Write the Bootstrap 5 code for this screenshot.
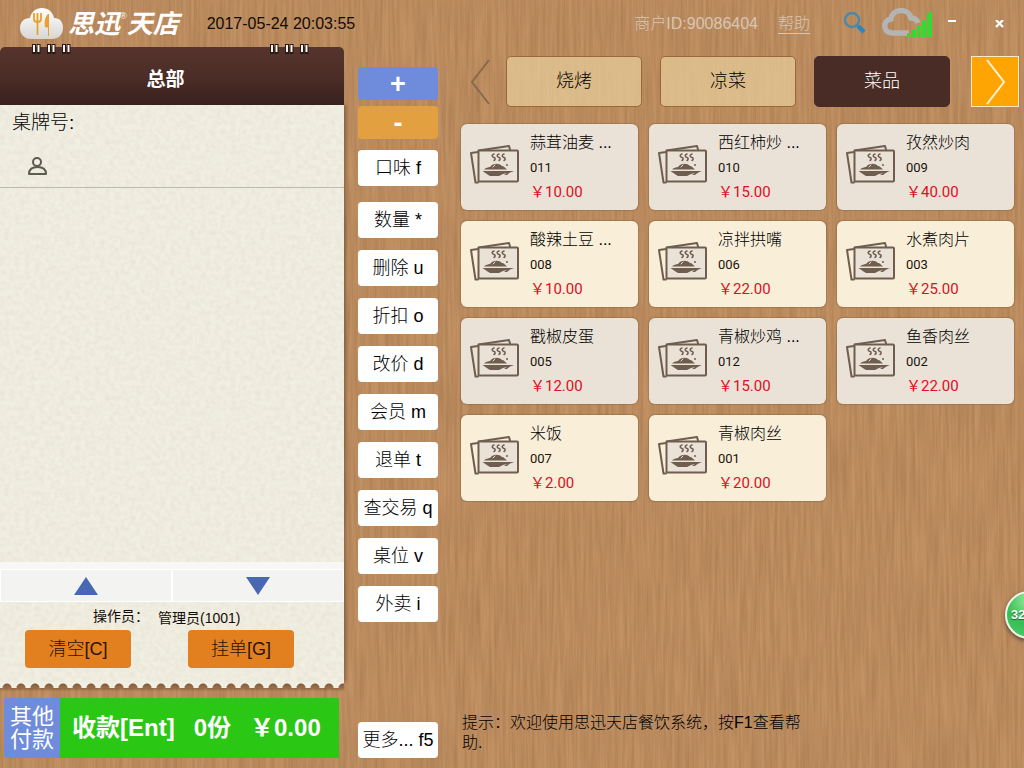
<!DOCTYPE html>
<html lang="zh-CN">
<head>
<meta charset="utf-8">
<meta name="viewport" content="width=device-width, initial-scale=1">
<title>思迅天店</title>
<link href="https://cdn.jsdelivr.net/npm/bootstrap@5.3.0/dist/css/bootstrap.min.css" rel="stylesheet">
<style>
  :root { --wood: #c29265; --paper: #f1efe3; --cocoa: #4a2c26; --ink: #120c08; }
  body {
    font-family: "Liberation Sans", "Noto Sans CJK SC", sans-serif;
    font-size: 16px; line-height: 20px; color: var(--ink);
    background-color: var(--wood);
    background-image: url("data:image/svg+xml,%3Csvg xmlns='http://www.w3.org/2000/svg' width='512' height='512'%3E%3Cfilter id='w' x='0' y='0' width='100%25' height='100%25' color-interpolation-filters='sRGB'%3E%3CfeTurbulence type='fractalNoise' baseFrequency='.35 .014' numOctaves='3' seed='7' stitchTiles='stitch'/%3E%3CfeColorMatrix values='0 0 0 0 .56 0 0 0 0 .38 0 0 0 0 .22 .6 0 0 0 -.14'/%3E%3C/filter%3E%3Crect width='512' height='512' filter='url(%23w)'/%3E%3C/svg%3E");
  }
  .btn { --bs-btn-font-family: inherit; font-weight: 400; }
  .light { font-weight: 300; }

  .topbar { height: 47px; padding-left: 20px; padding-right: 12px; }
  .brand-text { font-size: 26px; line-height: 36px; font-style: italic; font-weight: 700; color: #fff; }
  .brand-text sup { font-size: 9px; font-weight: 400; top: -14px; }
  .clock { margin-left: 24px; }
  .muted-link { color: #d6c6b4; }
  .help-link { text-decoration: none; border-bottom: 1px solid #d6c6b4; line-height: 19px; margin-left: 20px; }
  .win-btn { width: 24px; height: 24px; }

  .workspace { display: grid; grid-template-columns: 43fr 12fr 73fr; min-height: calc(100vh - 47px); }

  .ticket-head {
    height: 58px; padding: 7px 13px 0 0; border-radius: 5px 5px 0 0; color: #fff; font-size: 19px; font-weight: 700;
    background: linear-gradient(#56342d, #4b2c26 55%, #38211d);
  }
  .rings { position: absolute; top: -4px; }
  .rings-start { left: 31px; }
  .rings-end { right: 35px; }
  .paper {
    background-color: var(--paper);
    background-image: url("data:image/svg+xml,%3Csvg xmlns='http://www.w3.org/2000/svg' width='256' height='256'%3E%3Cfilter id='p' x='0' y='0' width='100%25' height='100%25' color-interpolation-filters='sRGB'%3E%3CfeTurbulence type='fractalNoise' baseFrequency='.2' numOctaves='3' seed='3' stitchTiles='stitch'/%3E%3CfeColorMatrix values='0 0 0 0 .8 0 0 0 0 .78 0 0 0 0 .67 .4 0 0 0 -.12'/%3E%3C/filter%3E%3Crect width='256' height='256' filter='url(%23p)'/%3E%3C/svg%3E");
    box-shadow: 2px 0 3px rgba(70, 40, 20, .4);
  }
  .table-info { height: 83px; padding: 8px 12px; border-bottom: 1px solid #bdbbae; font-size: 19px; }
  .pager { height: 40px; padding-top: 7px; background: #f7f7f6; }
  .pager .btn { border: 1px solid #fff; border-radius: 0; background: #f3f3f2; padding: 0; }
  .operator { font-size: 14px; height: 28px; padding-left: 93px; padding-top: 4px; gap: 9px; }
  .operator span + span { padding-top: 2px; }
  .ticket-actions { padding: 0 50px 14px 25px; }
  .btn-order { width: 106px; height: 38px; padding: 0; font-size: 18px; border: 0; border-radius: 4px; background: #e2801f; color: #2b1305; }
  .scallop {
    height: 6px;
    background: radial-gradient(circle at 7px 6px, transparent 4px, var(--paper) 5px) 0 0 / 14px 6px repeat-x, linear-gradient(#7a5334, #9a6f49);
    box-shadow: 0 2px 2px rgba(70, 40, 20, .3);
  }
  .paybar { margin: 10px 5px 10px 4px; height: 60px; }
  .btn-other { width: 56px; padding: 0; border: 0; border-radius: 3px 0 0 3px; background: #6e8cdb; color: #fff; font-size: 22px; line-height: 23px; }
  .btn-pay { padding: 0 12px; border: 0; border-radius: 0; background: #2ac814; color: #fff; font-size: 24px; font-weight: 700; gap: 19px; white-space: nowrap; }

  .keys { padding: 20px 2px 10px 14px; }
  .btn-key { width: 80px; height: 36px; flex: none; padding: 0; border: 0; border-radius: 4px; background: #fff; color: #000; font-size: 18px; line-height: 20px; white-space: nowrap; margin-bottom: 12px; }
  .btn-step { height: 33px; font-size: 27px; font-weight: 700; color: #fff; margin-bottom: 6px; }
  .btn-plus { background: #6e8cdb; }
  .btn-minus { background: #e3a041; margin-bottom: 11px; }

  .menu { padding: 9px 10px 15px 21px; }
  .tabs { height: 51px; margin-right: -5px; }
  .tab-set { gap: 18px; margin: 0 21px 0 15px; }
  .btn-arrow { padding: 0; border: 0; border-radius: 0; }
  .btn-next { width: 48px; height: 51px; background: #ffa503; border: 1px solid #ffe9bd; }
  .btn-tab { flex: 1 1 0; height: 51px; padding: 0; border: 1px solid #99693b; border-radius: 5px; background: rgba(231, 203, 154, .75); color: #000; font-size: 18px; }
  .btn-tab.active { background: var(--cocoa); border-color: var(--cocoa); color: #fff; }

  .dishes { display: grid; grid-template-columns: repeat(3, 1fr); gap: 11px; margin-top: 17px; }
  .dish { height: 86px; padding: 8px; border: 0; border-radius: 6px; gap: 10px; background: #eae2d7; box-shadow: 0 0 1px 1px rgba(120, 85, 50, .35); color: #1c130c; text-align: left; }
  .dish.cream { background: #f9eed8; }
  .dish:hover { color: #1c130c; }
  .dish svg { margin: 13px 0 0 1px; flex: none; }
  .dish-name { font-size: 16px; line-height: 20px; font-weight: 300; padding-top: 1px; color: #000; }
  .dish-code { font-family: Roboto, sans-serif; font-size: 13px; line-height: 20px; margin-top: 5px; }
  .dish-price { font-family: Roboto, "Noto Sans CJK SC", sans-serif; font-size: 15px; line-height: 20px; margin-top: 4px; color: #dc0f23; }
  .hint { max-width: 346px; padding-left: 1px; color: #000; }
  .bubble { position: fixed; right: -29px; top: 591px; width: 48px; height: 48px; border-radius: 50%; border: 2px solid #eef5ea; background: radial-gradient(circle at 50% 15%, #9beb9b, #35bd56 55%, #4fd06a); color: #fff; font-size: 13px; font-weight: 700; padding: 0 0 0 4px; text-shadow: 0 1px 1px #17642b; box-shadow: 0 2px 4px rgba(0, 0, 0, .5); }
</style>
</head>
<body class="overflow-x-hidden">
<svg width="0" height="0" class="position-absolute" aria-hidden="true">
  <defs>
    <g id="dish-icon" fill="none" stroke="#6f5e50" stroke-width="2" stroke-linejoin="round" stroke-linecap="round">
      <path d="M8 37.500H5.500L1 8l7-1M8.500 5.500L39 1l1 3.500"/>
      <rect x="8.500" y="5.500" width="39.500" height="31" rx="1" fill="#eae2d7"/>
      <path stroke-width="1.500" d="M24 9c-3 1-2 3 0 3.500s1 2.500 0 3M29 9c-3 1-2 3 0 3.500s1 2.500 0 3M34 9c-3 1-2 3 0 3.500s1 2.500 0 3"/>
      <path fill="#6f5e50" stroke="none" d="M14 24.500c2-2 4-2 6-2.500 3-4 9-4 12-1 2 0 3 2 5 3.500zM12.500 26H44c-3 1-5 2-7 4h-3l3-2-4 1-4 2h-9c-3-2-5-3-7.500-5z"/>
      <path stroke="#eae2d7" stroke-width="1" d="M23 22l2-2"/>
      <circle cx="37" cy="20" r="1" fill="#6f5e50" stroke="none"/>
    </g>
    <g id="rings">
      <path fill="#2a1a14" d="M1 1h4v10H1zM5.500 1h4v10h-4zM16 1h4v10h-4zM20.500 1h4v10h-4zM31 1h4v10h-4zM35.500 1h4v10h-4z"/>
      <path fill="#f7f4ee" d="M2 2h2v7H2zM6.500 2h2v7h-2zM17 2h2v7h-2zM21.500 2h2v7h-2zM32 2h2v7h-2zM36.500 2h2v7h-2z"/>
    </g>
  </defs>
</svg>

<header class="topbar d-flex align-items-center">
  <svg width="44" height="32" viewBox="0 0 44 32" aria-hidden="true">
    <defs><linearGradient id="cl" x2="0" y2="1"><stop stop-color="#fff"/><stop offset="1" stop-color="#d9d6d2"/></linearGradient></defs>
    <path fill="url(#cl)" d="M11 31C4 31 0 26 0 20c0-6 4-10 10-10C11 4 16 0 22 0s11 4 12 10c6 0 9 4 9 10 0 7-5 11-11 11z"/>
    <path d="M14 5v6q0 3 3.500 3t3.500-3V5M17.500 5v22" fill="none" stroke="#e9a02c" stroke-width="1.800"/>
    <path d="M28.500 28V6c-3 3-4 8-3 13h3" fill="#e9a02c" stroke="#e9a02c"/>
  </svg>
  <div class="brand-text ms-1 pe-1 text-nowrap">思迅<sup>®</sup>天店</div>
  <time class="clock text-nowrap">2017-05-24 20:03:55</time>
  <div class="ms-auto d-flex align-items-center text-nowrap">
    <span class="muted-link light">商户ID:90086404</span>
    <a href="#" class="muted-link help-link light">帮助</a>
    <button class="btn p-0 border-0 ms-4 ps-2" aria-label="搜索">
      <svg class="d-block" width="24" height="24" viewBox="0 0 24 24"><circle cx="10" cy="8" r="7" fill="none" stroke="#4a8aa8" stroke-width="2.500"/><path d="M15 13l2 2" stroke="#4a8aa8" stroke-width="2"/><path d="M16 14l6 6" stroke="#2b86bd" stroke-width="4.500"/></svg>
    </button>
    <svg class="ms-3" width="50" height="31" viewBox="0 0 50 31" aria-hidden="true">
      <path d="M27 25H10c-10-1-9-13-1-14C10 1 26-1 29 10c4 0 6 2 7 5" fill="none" stroke="#b4b4b2" stroke-width="5.500"/>
      <path d="M25 29v-4h4v4zM30 29v-7h4v7zM35 29V18h4v11zM40 29V12h4v17zM45 29V6l5-3v26z" fill="#35d92f"/>
    </svg>
    <button class="btn p-0 border-0 win-btn ms-2 d-flex align-items-center justify-content-center" aria-label="最小化"><svg width="10" height="10"><path d="M1 2h8" stroke="#fff" stroke-width="2"/></svg></button>
    <button class="btn p-0 border-0 win-btn ms-4 d-flex align-items-center justify-content-center" aria-label="关闭"><svg width="10" height="8"><path d="M1 0l7 7M8 0L1 7" stroke="#fff" stroke-width="2.300"/></svg></button>
  </div>
</header>

<main class="workspace">
  <section class="d-flex flex-column">
    <div class="ticket-head position-relative d-flex align-items-center justify-content-center">
      <svg class="rings rings-start" width="40" height="12" aria-hidden="true"><use href="#rings"/></svg>
      <svg class="rings rings-end" width="40" height="12" aria-hidden="true"><use href="#rings"/></svg>
      总部
    </div>
    <div class="paper flex-grow-1 d-flex flex-column">
      <div class="table-info light">
        <div>桌牌号:</div>
        <svg class="d-block mt-4 ms-3" width="20" height="19" viewBox="2 2 20 19" fill="none" stroke="#5d5a50" stroke-width="2" aria-hidden="true"><circle cx="11" cy="7" r="4"/><path d="M3 19c0-5 3-7 8.500-7s8.500 2 8.500 7z" stroke-linejoin="round"/></svg>
      </div>
      <div class="flex-grow-1"></div>
      <div class="pager d-flex">
        <button class="btn flex-fill" aria-label="上翻"><svg width="24" height="18"><path d="M12 0l12 18H0z" fill="#4868b4"/></svg></button>
        <button class="btn flex-fill" aria-label="下翻"><svg width="24" height="18"><path d="M0 0h24L12 18z" fill="#4868b4"/></svg></button>
      </div>
      <div class="operator d-flex"><span>操作员：</span><span>管理员(1001)</span></div>
      <div class="ticket-actions d-flex justify-content-between">
        <button class="btn btn-order light">清空[C]</button>
        <button class="btn btn-order light">挂单[G]</button>
      </div>
    </div>
    <div class="scallop"></div>
    <div class="paybar d-flex">
      <button class="btn btn-other">其他<br>付款</button>
      <button class="btn btn-pay flex-fill d-flex align-items-center"><span>收款[Ent]</span><span>0份</span><span>￥0.00</span></button>
    </div>
  </section>

  <nav class="keys d-flex flex-column" aria-label="功能">
    <button class="btn btn-key btn-step btn-plus">+</button>
    <button class="btn btn-key btn-step btn-minus">-</button>
    <button class="btn btn-key light mb-3">口味 f</button>
    <button class="btn btn-key light">数量 *</button>
    <button class="btn btn-key light">删除 u</button>
    <button class="btn btn-key light">折扣 o</button>
    <button class="btn btn-key light">改价 d</button>
    <button class="btn btn-key light">会员 m</button>
    <button class="btn btn-key light">退单 t</button>
    <button class="btn btn-key light">查交易 q</button>
    <button class="btn btn-key light">桌位 v</button>
    <button class="btn btn-key light">外卖 i</button>
    <button class="btn btn-key light mt-auto mb-0">更多... f5</button>
  </nav>

  <section class="menu d-flex flex-column">
    <div class="tabs d-flex align-items-center">
      <button class="btn btn-arrow ms-2" aria-label="上一页"><svg class="d-block" width="22" height="48"><path d="M20 2L3 24l17 22" fill="none" stroke="#866a4b" stroke-width="2"/></svg></button>
      <div class="tab-set d-flex flex-fill">
        <button class="btn btn-tab light">烧烤</button>
        <button class="btn btn-tab light">凉菜</button>
        <button class="btn btn-tab light active">菜品</button>
      </div>
      <button class="btn btn-arrow btn-next" aria-label="下一页"><svg class="d-block mx-auto" width="22" height="48"><path d="M3 2l17 22L3 46" fill="none" stroke="#fff3d8" stroke-width="2"/></svg></button>
    </div>
    <div class="dishes" id="dishes"></div>
    <p class="hint light mb-0 mt-auto">提示：欢迎使用思迅天店餐饮系统，按F1查看帮助.</p>
  </section>
</main>
<button class="btn bubble text-start">32</button>

<script src="https://cdn.jsdelivr.net/npm/bootstrap@5.3.0/dist/js/bootstrap.bundle.min.js"></script>
<script>
  const dishes = [
    ["蒜茸油麦 ...", "011", "10.00"], ["西红柿炒 ...", "010", "15.00"], ["孜然炒肉", "009", "40.00"],
    ["酸辣土豆 ...", "008", "10.00"], ["凉拌拱嘴", "006", "22.00"], ["水煮肉片", "003", "25.00"],
    ["戳椒皮蛋", "005", "12.00"], ["青椒炒鸡 ...", "012", "15.00"], ["鱼香肉丝", "002", "22.00"],
    ["米饭", "007", "2.00"], ["青椒肉丝", "001", "20.00"]
  ];
  document.getElementById("dishes").innerHTML = dishes.map(([name, code, price], i) => `
    <button class="btn dish d-flex align-items-start ${Math.floor(i / 3) % 2 ? "cream" : ""}">
      <svg width="50" height="39" aria-hidden="true"><use href="#dish-icon"/></svg>
      <span class="d-flex flex-column text-nowrap">
        <span class="dish-name">${name}</span>
        <span class="dish-code">${code}</span>
        <span class="dish-price">￥${price}</span>
      </span>
    </button>`).join("");
</script>
</body>
</html>
